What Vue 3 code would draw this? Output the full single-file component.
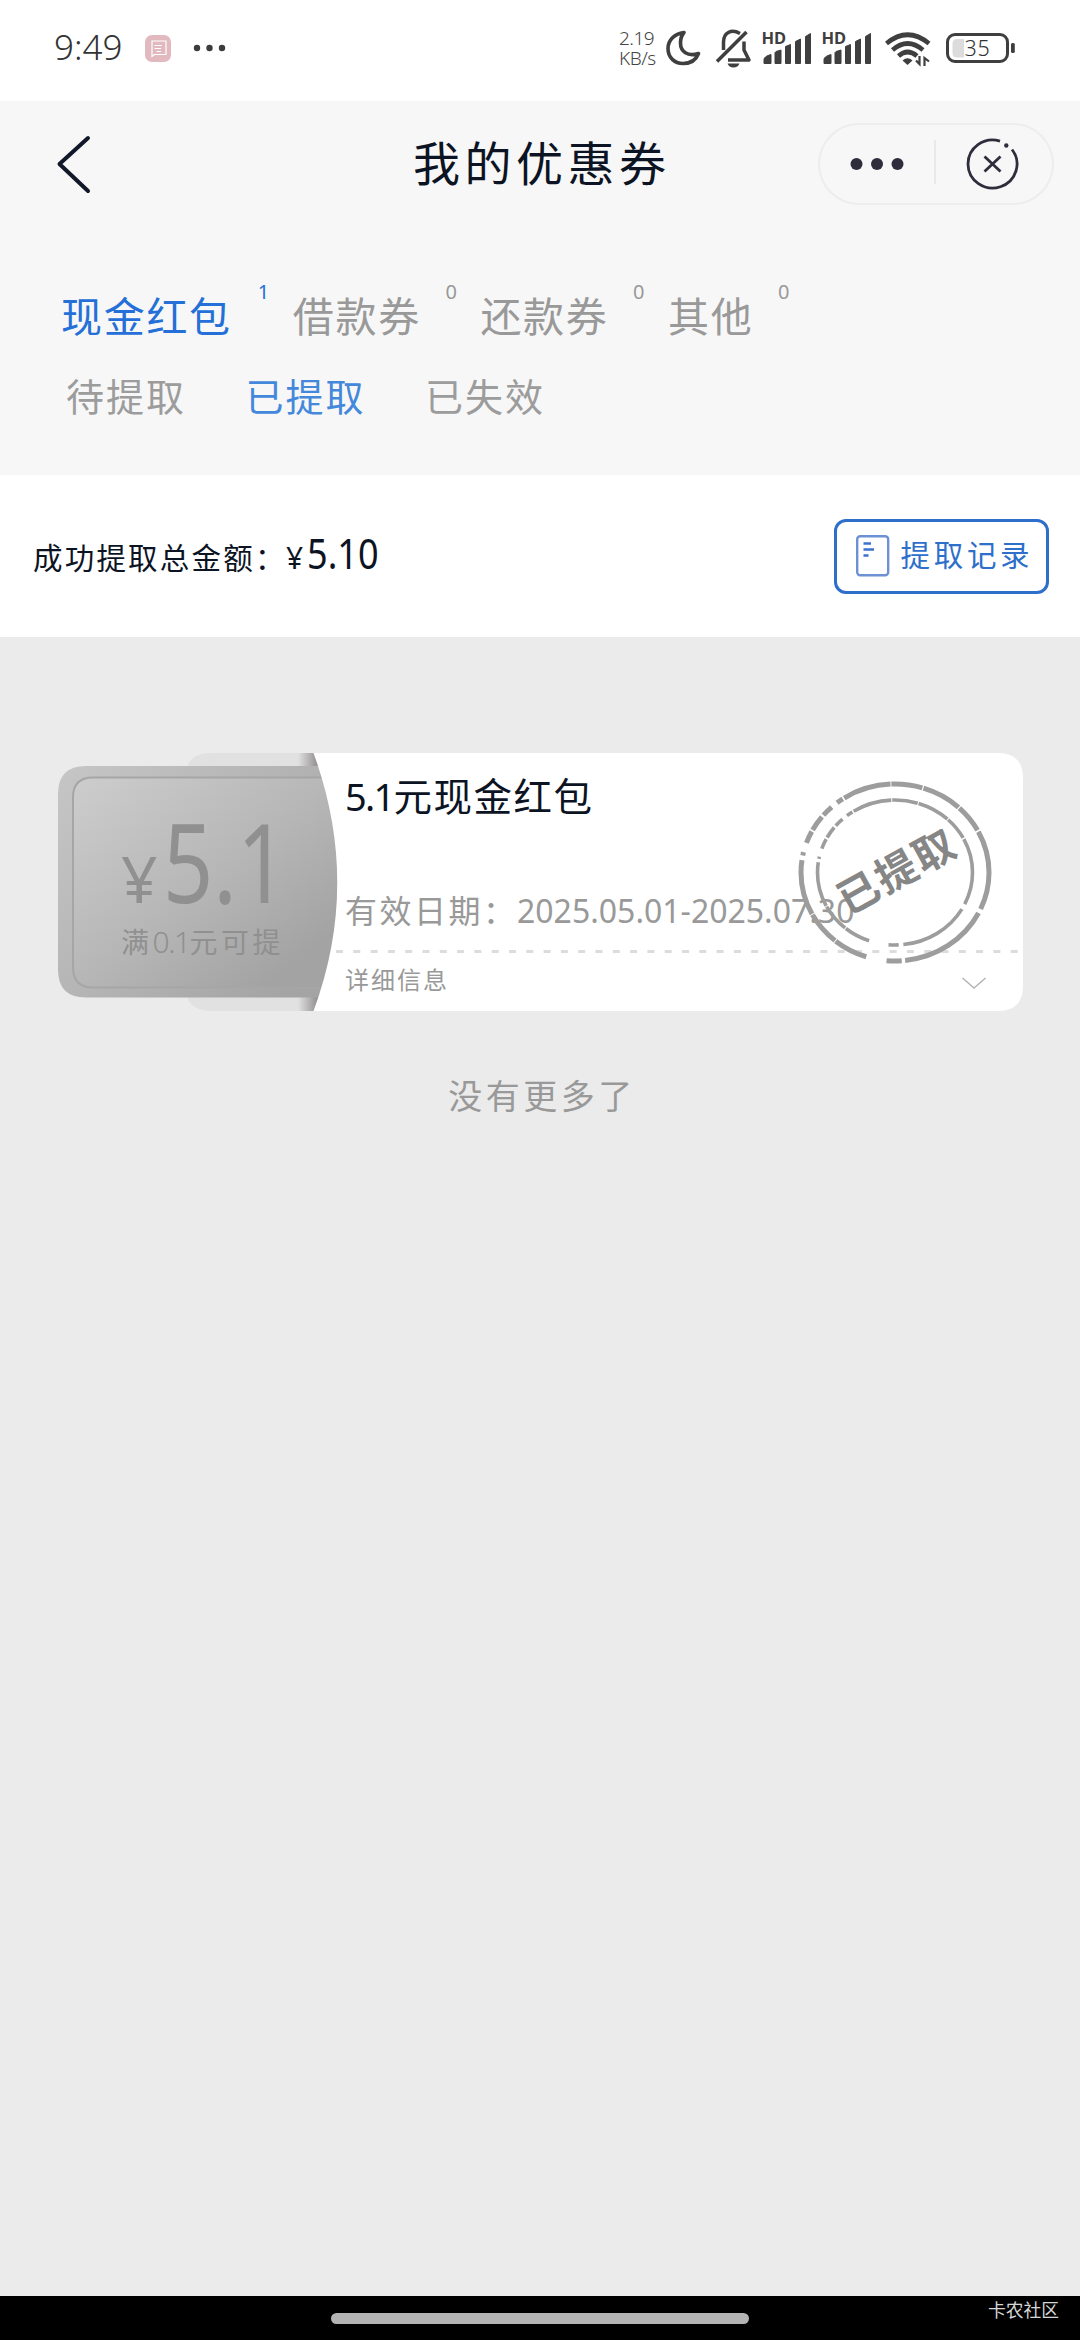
<script setup>
const tabs = [
  { label: '现金红包', count: 1, active: true },
  { label: '借款券', count: 0 },
  { label: '还款券', count: 0 },
  { label: '其他', count: 0 },
]
const states = [
  { label: '待提取' },
  { label: '已提取', active: true },
  { label: '已失效' },
]
const signalBars = [
  'M764 63.5v-4q0-3 7-5v9z',
  'M775 63.5v-11l1-1 5-1.500v13.500z',
  'M785.500 63.500v-17l5-2v19z',
  'M795.500 63.500v-22l5-2.500v24.500z',
  'M805.500 63.500v-27l5-3v30z',
]
</script>

<template>
  <div class="page">
    <header class="status">
      <span class="time">9:49</span>
      <svg class="note" width="26" height="27" viewBox="0 0 26 27">
        <rect width="26" height="27" rx="7" fill="#e3b9c0" />
        <path d="M7 21.500V6H21V19.500H9.500Z M9.500 10.500H17 M9.500 13.500H16 M11.500 16.500H16" fill="none" stroke="#fff" stroke-width="1.200" />
      </svg>
      <svg class="more" width="34" height="8" viewBox="0 0 34 8" fill="#3c3c3c">
        <circle cx="4" cy="4" r="3.200" /><circle cx="16.500" cy="4" r="3.200" /><circle cx="29" cy="4" r="3.200" />
      </svg>
      <div class="speed"><span>2.19</span><span>KB/s</span></div>
      <svg class="sys" width="420" height="50" viewBox="660 24 420 50">
        <path d="M684 32.500C674 34 668 40.500 668 48.500C668 57.500 674.500 63.500 683 63.500C690.500 63.500 696 60 698.500 53.500C687.500 57 680.500 51.500 680.500 43C680.500 39 681.500 35.500 684 32.500Z" fill="none" stroke="#3f3f3f" stroke-width="3.600" stroke-linejoin="round" />
        <g fill="none" stroke="#3f3f3f" stroke-width="3.500" stroke-linejoin="round">
          <path d="M717 61.500L746.500 32" />
          <path d="M740 33.500C731 28.500 723.500 33 723.500 42V50" />
          <path d="M744 41.500V50L749 60H728" />
        </g>
        <path d="M727.500 63.500H739.500Q738 67.500 733.500 67.500T727.500 63.500Z" fill="#3f3f3f" />
        <g v-for="offset in [0, 60]" :key="offset" :transform="`translate(${offset} 0)`" fill="#3f3f3f">
          <path v-for="bar in signalBars" :key="bar" :d="bar" stroke="#3f3f3f" stroke-width="1" stroke-linejoin="round" />
          <text x="761.500" y="44" class="hd">HD</text>
        </g>
        <g fill="none" stroke="#3f3f3f" stroke-width="4.600">
          <path d="M886.500 43.500Q907.500 26 929 43.500" />
          <path d="M892.500 50Q907.500 37 923 50" />
          <path d="M898.500 56Q907.500 48 917 56" />
        </g>
        <path d="M902.500 60.500Q907.500 56 912.500 60.500L907.500 65Z" fill="#3f3f3f" />
        <path d="M919.500 56V64L916 60.500 M924.500 66V58L929 61.500" fill="none" stroke="#3f3f3f" stroke-width="2.200" />
        <rect x="947.500" y="34.500" width="60" height="27" rx="7.500" fill="#fff" stroke="#3f3f3f" stroke-width="3" />
        <path d="M964 39V57.500H957Q952.500 57.500 952.500 53V43.500Q952.500 39 957 39Z" fill="#dcdcdc" />
        <rect x="1011" y="43" width="3.800" height="10" rx="1.500" fill="#3f3f3f" />
        <text x="964.500" y="56" class="level">35</text>
      </svg>
    </header>

    <section class="head">
      <nav class="nav">
        <svg class="back" width="40" height="60" viewBox="0 0 40 60">
          <path d="M33 4L4.500 30L33 57" fill="none" stroke="#10182a" stroke-width="4" stroke-linecap="round" stroke-linejoin="round" />
        </svg>
        <h1>我的优惠券</h1>
        <div class="capsule">
          <svg width="232" height="78" viewBox="819 125 232 78">
            <g fill="#2f2d3c"><circle cx="855.500" cy="164" r="6" /><circle cx="876" cy="164" r="6" /><circle cx="896.500" cy="164" r="6" /></g>
            <path d="M934 140V184" stroke="#e9e9e9" stroke-width="2" />
            <path d="M999 141.200A24.500 24 0 1 0 1011 149.500" fill="none" stroke="#2f2d3c" stroke-width="2.800" />
            <circle cx="1005.300" cy="145.500" r="2.200" fill="#2f2d3c" />
            <path d="M983.500 156.500L999.500 171.500M999.500 156.500L983.500 171.500" stroke="#2f2d3c" stroke-width="2.800" />
          </svg>
        </div>
      </nav>
      <div class="tabs">
        <div v-for="t in tabs" :key="t.label" class="tab" :class="{ on: t.active }">
          <span>{{ t.label }}</span><sup>{{ t.count }}</sup>
        </div>
      </div>
      <div class="states">
        <span v-for="s in states" :key="s.label" :class="{ on: s.active }">{{ s.label }}</span>
      </div>
    </section>

    <section class="summary">
      <div class="total"><span class="label">成功提取总金额：</span><span class="yen">¥</span><span class="sum">5.10</span></div>
      <button class="records">
        <svg width="34" height="42" viewBox="0 0 34 42" fill="none">
          <rect x="1.200" y="1.200" width="31" height="39" rx="3" stroke="#6e91d6" stroke-width="2.400" />
          <path d="M7.500 8.500H15M7.500 14.500H18M7.500 20.500H12.500" stroke="#3c72ce" stroke-width="2.400" />
        </svg>
        <span>提取记录</span>
      </button>
    </section>

    <main class="list">
      <article class="ticket">
        <svg class="shape" width="966" height="260" viewBox="58 752 966 260">
          <defs>
            <linearGradient id="face" x1="0" y1="0" x2="1" y2="1">
              <stop offset="0" stop-color="#cdcdcd" /><stop offset=".5" stop-color="#b6b6b6" /><stop offset=".85" stop-color="#a3a3a3" /><stop offset="1" stop-color="#a3a3a3" />
            </linearGradient>
            <linearGradient id="rim" x1="0" y1="0" x2="1" y2=".7">
              <stop offset="0" stop-color="#c6c6c6" /><stop offset="1" stop-color="#a4a4a4" />
            </linearGradient>
            <linearGradient id="shade" x1="0" x2="1">
              <stop offset="0" stop-color="#8a8587" stop-opacity="0" /><stop offset="1" stop-color="#8a8587" />
            </linearGradient>
          </defs>
          <path d="M211 753H330V1011H211Q185 1011 185 985V779Q185 753 211 753Z" fill="#e1e1e1" />
          <rect x="298" y="753" width="22" height="258" fill="url(#shade)" />
          <path d="M86 766H345V997.500H86Q58 997.500 58 969.500V794Q58 766 86 766Z" fill="url(#rim)" />
          <path d="M345 777.500H93Q73 777.500 73 797.500V967Q73 987.500 93 987.500H345Z" fill="url(#face)" stroke="#a6a6a6" stroke-width="2" />
          <path d="M313.500 753H998Q1023 753 1023 778V986Q1023 1011 998 1011H313.500Q361 883 313.500 753Z" fill="#fff" />
          <path d="M336 951.500H1019" stroke="#dcdcdc" stroke-width="3" stroke-dasharray="7 10.300" />
        </svg>
        <div class="value">
          <div class="amount"><span class="sign">¥</span><span class="num">5.1</span></div>
          <div class="cond">满<i>0.1</i>元可提</div>
        </div>
        <div class="info">
          <h2><i>5.1</i>元现金红包</h2>
          <p class="date"><span>有效日期：</span><i>2025.05.01-2025.07.30</i></p>
          <div class="detail">
            <span>详细信息</span>
            <svg width="26" height="14" viewBox="0 0 26 14"><path d="M1.500 2L13 12L24.500 2" fill="none" stroke="#b5b5b5" stroke-width="1.500" /></svg>
          </div>
        </div>
        <svg class="stamp" width="200" height="190" viewBox="795 777 200 190">
          <g fill="none" stroke="#9d9d9d">
            <ellipse cx="895" cy="872.500" rx="94" ry="88.500" stroke-width="5" pathLength="1000" stroke-dasharray="66 8 158 6 27 36 60 1.500 60 1.500 98 8 6 17 22 3 28 4 20 12 12 3 85 1.500 55 2 70 2 50 3 75 0" />
            <ellipse cx="895" cy="872.500" rx="77.500" ry="72.500" stroke-width="3.600" pathLength="1000" stroke-dasharray="70 12 150 10 22 42 56 2 60 2 96 7 5 18 22 4 26 5 20 12 14 3 84 2 55 2 70 2 50 3 74 0" />
          </g>
          <text class="stamp-text" transform="translate(897 871) rotate(-29)" text-anchor="middle" y="15">已提取</text>
        </svg>
      </article>
      <p class="end">没有更多了</p>
    </main>

    <footer class="bottom">
      <div class="handle"></div>
      <span class="mark">卡农社区</span>
    </footer>
  </div>
</template>

<style>
body { margin: 0; background: #ebebeb; }
</style>

<style scoped>
.page {
  width: 1080px;
  height: 2340px;
  display: flex;
  flex-direction: column;
  background: #ebebeb;
  color: #0c1424;
  font-family: "KaiTi", "Noto Sans CJK SC", sans-serif;
  overflow: hidden;
}
h1, h2, p { margin: 0; font-weight: 400; }
i, sup { font-style: normal; font-family: "Noto Sans", sans-serif; }
svg { flex: none; display: block; }

.status { height: 101px; flex: none; display: flex; align-items: flex-start; background: #fff; }
.time { width: 90px; margin: 23px 0 0 54px; font: 300 35px/48px "Noto Sans", sans-serif; color: #333; white-space: nowrap; }
.note { margin: 35px 0 0 1px; }
.more { margin: 44px 0 0 22px; }
.speed { width: 42px; margin: 29px 0 0 392px; display: flex; flex-direction: column; font: 300 19px/19.500px "Noto Sans", sans-serif; color: #444; white-space: nowrap; letter-spacing: -.5px; }
.sys { margin: 24px 0 0 -1px; }
.hd { font: 700 16.500px "Noto Sans", sans-serif; }
.level { font: 300 21.500px "Noto Sans", sans-serif; letter-spacing: .8px; fill: #333; }

.head { height: 374px; flex: none; background: #f7f7f7; }
.nav { height: 126px; display: flex; align-items: center; }
.back { margin-left: 55px; }
.nav h1 { margin: -6px 0 0 318px; width: 405px; font-size: 47px; line-height: 60px; letter-spacing: 4.500px; }
.capsule { width: 232px; height: 78px; border: 2px solid #ededed; border-radius: 41px; }

.tabs { display: flex; margin: 57px 0 0 61px; height: 60px; }
.tab { display: flex; color: #999; font-size: 41px; line-height: 60px; letter-spacing: 1.700px; }
.tab sup { width: 14px; margin: -2px 21px 0 24.500px; font-size: 20px; line-height: 20px; font-weight: 400; letter-spacing: 0; }
.tab.on { color: #2470d8; }
.tab.on sup { margin-left: 26px; }
.states { display: flex; gap: 59.500px; margin: 21px 0 0 66px; color: #9c9c9c; font-size: 38px; line-height: 60px; letter-spacing: 2px; }
.states .on { color: #4488dc; }

.summary { height: 162px; flex: none; display: flex; align-items: center; justify-content: space-between; padding: 0 31.500px 0 33px; background: #fff; }
.total { display: flex; align-items: baseline; margin-top: -2px; line-height: 60px; }
.label { width: 253px; font-size: 29.500px; letter-spacing: 2.200px; white-space: nowrap; }
.yen { width: 21px; font: 400 30px "Noto Sans", sans-serif; }
.sum { font: 400 41px "Noto Sans", sans-serif; transform: scaleX(.88); transform-origin: left; }
.records { box-sizing: border-box; width: 215px; height: 75px; margin: 0; padding: 0 0 0 19px; display: flex; align-items: center; gap: 11px; border: 3px solid #2d6fcb; border-radius: 12px; background: #fff; color: #2d6fcb; font-family: inherit; font-size: 29.500px; letter-spacing: 3.700px; white-space: nowrap; }
.records span { margin-top: -7px; }

.list { flex: 1; padding: 115px 57px 0 58px; }
.ticket { position: relative; display: flex; height: 260px; }
.shape { position: absolute; left: 0; top: 0; }
.stamp { position: absolute; left: 737px; top: 25px; }
.value { position: relative; width: 287px; flex: none; color: #909090; }
.amount { height: 110px; padding: 58px 0 0 63px; display: flex; align-items: baseline; line-height: 100px; font-family: "Noto Sans", sans-serif; }
.sign { width: 42px; font-size: 64px; }
.num { font-size: 110px; transform: scaleX(.8); transform-origin: left; }
.cond { margin: 1px 0 0 63px; font-size: 28px; line-height: 40px; letter-spacing: 3.500px; white-space: nowrap; }
.cond i { font-weight: 300; font-size: 30px; letter-spacing: -1.500px; }
.info { position: relative; flex: 1; }
.info h2 { margin-top: 12px; font-size: 38.500px; line-height: 60px; letter-spacing: 1.500px; }
.info h2 i { font-size: 38px; letter-spacing: -1.700px; }
.date { display: flex; align-items: baseline; margin-top: 53px; line-height: 60px; color: #999; font-size: 32px; letter-spacing: 2.500px; white-space: nowrap; }
.date span { width: 172px; }
.date i { font-size: 32px; font-weight: 400; letter-spacing: 0; }
.detail { display: flex; justify-content: space-between; align-items: center; margin: 18px 36px 0 0; line-height: 40px; color: #999; font-size: 24px; letter-spacing: 2px; }
.detail svg { margin-top: 8px; }
.stamp-text { font: 700 41px "Noto Sans CJK SC", sans-serif; letter-spacing: 2px; fill: #868686; }
.end { margin: 53px 0 0; padding-left: 3px; text-align: center; color: #999; font-size: 34px; line-height: 60px; letter-spacing: 3.500px; }

.bottom { height: 44px; flex: none; display: flex; align-items: flex-start; background: #000; }
.handle { width: 418px; height: 11px; margin: 17px 0 0 331px; border-radius: 6px; background: #b3b3b3; }
.mark { margin: 1px 0 0 239px; color: #d6d6d6; font: 400 17.800px/24px "Noto Sans CJK SC", sans-serif; white-space: nowrap; }
</style>
